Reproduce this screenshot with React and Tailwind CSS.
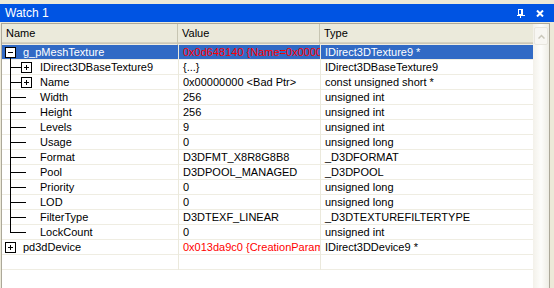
import React from 'react';

const rows = [
  { name: 'g_pMeshTexture', value: '0x0d648140 {Name=0x0000', type: 'IDirect3DTexture9 *', kind: 'root-open', selected: true, red: true },
  { name: 'IDirect3DBaseTexture9', value: '{...}', type: 'IDirect3DBaseTexture9', kind: 'child-box' },
  { name: 'Name', value: '0x00000000 <Bad Ptr>', type: 'const unsigned short *', kind: 'child-box' },
  { name: 'Width', value: '256', type: 'unsigned int', kind: 'child' },
  { name: 'Height', value: '256', type: 'unsigned int', kind: 'child' },
  { name: 'Levels', value: '9', type: 'unsigned int', kind: 'child' },
  { name: 'Usage', value: '0', type: 'unsigned long', kind: 'child' },
  { name: 'Format', value: 'D3DFMT_X8R8G8B8', type: '_D3DFORMAT', kind: 'child' },
  { name: 'Pool', value: 'D3DPOOL_MANAGED', type: '_D3DPOOL', kind: 'child' },
  { name: 'Priority', value: '0', type: 'unsigned long', kind: 'child' },
  { name: 'LOD', value: '0', type: 'unsigned long', kind: 'child' },
  { name: 'FilterType', value: 'D3DTEXF_LINEAR', type: '_D3DTEXTUREFILTERTYPE', kind: 'child' },
  { name: 'LockCount', value: '0', type: 'unsigned int', kind: 'child-last' },
  { name: 'pd3dDevice', value: '0x013da9c0 {CreationParam', type: 'IDirect3DDevice9 *', kind: 'root-closed', red: true },
];

function Box({ x, open }) {
  return (
    <g>
      <rect x={x + 0.5} y={2.5} width={10} height={10} fill="#fff" stroke="#000" />
      <line x1={x + 3} y1={7.5} x2={x + 8} y2={7.5} stroke="#000" />
      {!open && <line x1={x + 5.5} y1={5} x2={x + 5.5} y2={10} stroke="#000" />}
    </g>
  );
}

function Tree({ kind }) {
  if (kind === 'root-open' || kind === 'root-closed') {
    return (
      <svg width="21" height="15" className="shrink-0" shapeRendering="crispEdges">
        {kind === 'root-open' && <line x1={8.5} y1={12} x2={8.5} y2={15} stroke="#000" />}
        <Box x={3} open={kind === 'root-open'} />
      </svg>
    );
  }
  const last = kind === 'child-last';
  const box = kind === 'child-box';
  return (
    <svg width="38" height="15" className="shrink-0" shapeRendering="crispEdges">
      <line x1={8.5} y1={0} x2={8.5} y2={last ? 8 : 15} stroke="#000" />
      <line x1={8} y1={7.5} x2={box ? 19 : 24} y2={7.5} stroke="#000" />
      {box && <Box x={19} open={false} />}
    </svg>
  );
}

function Row({ r }) {
  const sel = r.selected;
  return (
    <div className={`flex h-[15px] shadow-[inset_0_-1px_0_#efede2] ${sel ? 'bg-[#316ac5]' : ''}`}>
      <div className={`w-[176px] flex items-start overflow-hidden whitespace-nowrap ${sel ? 'text-white' : 'text-black'}`}>
        <Tree kind={r.kind} />
        <span className="leading-[14px]">{r.name}</span>
      </div>
      <div className="w-[142px] border-l border-[#ebe9dc] pl-[4px] overflow-hidden whitespace-nowrap leading-[14px]">
        <span className={r.red ? 'text-[#ff0000]' : 'text-black'}>{r.value}</span>
      </div>
      <div className={`w-[213px] border-l border-[#ebe9dc] pl-[4px] overflow-hidden whitespace-nowrap leading-[14px] ${sel ? 'text-white' : 'text-black'}`}>
        {r.type}
      </div>
    </div>
  );
}

export default function App() {
  return (
    <div className="w-[554px] h-[288px] bg-[#ece9d8] flex flex-col overflow-hidden text-[11px] font-['Liberation_Sans',Arial,sans-serif]">
      <div className="h-[4px] shrink-0" />
      <div className="h-[18px] shrink-0 bg-[#0054e3] flex items-center pl-[5px] pr-[10px] text-white">
        <span className="flex-1 text-[12px]">Watch 1</span>
        <svg width="8" height="9" className="mr-[11px]" shapeRendering="crispEdges">
          <rect x="1.5" y="0.5" width="4" height="5" fill="none" stroke="#fff" />
          <line x1="4.5" y1="0" x2="4.5" y2="6" stroke="#fff" />
          <line x1="0" y1="6.5" x2="8" y2="6.5" stroke="#fff" />
          <line x1="3.5" y1="6" x2="3.5" y2="9" stroke="#fff" />
        </svg>
        <svg width="8" height="7">
          <path d="M1 0.5 L7 6.5 M7 0.5 L1 6.5" stroke="#fff" strokeWidth="2" />
        </svg>
      </div>
      <div className="h-[1px] shrink-0" />
      <div className="flex-1 ml-[1px] mr-[4px] border-l border-r border-t border-[#aca899] bg-white flex">
        <div className="w-[531px] flex flex-col">
          <div className="h-[21px] shrink-0 flex bg-[#ebeadb] shadow-[inset_0_-1px_0_#efede2,inset_0_-2px_0_#cbc7b8,inset_0_-3px_0_#d6d2c2] leading-[18px] text-black">
            <div className="w-[176px] pl-[4px] border-r border-[#c7c5b2]">Name</div>
            <div className="w-[142px] pl-[4px] border-r border-[#c7c5b2]">Value</div>
            <div className="w-[213px] pl-[4px]">Type</div>
          </div>
          {rows.map((r) => (
            <Row key={r.name} r={r} />
          ))}
          <div className="flex h-[15px] shadow-[inset_0_-1px_0_#efede2]">
            <div className="w-[176px]" />
            <div className="w-[142px] border-l border-[#ebe9dc]" />
            <div className="w-[213px] border-l border-[#ebe9dc]" />
          </div>
        </div>
        <div className="w-[17px] flex flex-col bg-gradient-to-r from-[#f3f1ea] via-[#fdfdfb] to-[#eeede5]">
          <div className="h-[18px] mt-[3px] mx-[1px] rounded-[2px] border border-[#e8e6de] bg-[#f7f6f2] flex items-center justify-center">
            <svg width="7" height="5">
              <path d="M0.5 4.5 L3.5 1.5 L6.5 4.5" fill="none" stroke="#c9c7ba" strokeWidth="1.5" />
            </svg>
          </div>
        </div>
      </div>
    </div>
  );
}
